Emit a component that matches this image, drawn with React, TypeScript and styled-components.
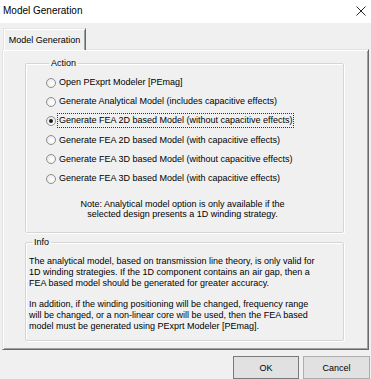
import React from "react";
import styled, { createGlobalStyle } from "styled-components";

const Global = createGlobalStyle`
  html, body { margin: 0; padding: 0; }
  body {
    background: #f0f0f0;
    font-family: "Liberation Sans", Arial, sans-serif;
    color: #000;
    overflow: hidden;
  }
`;

const Window = styled.div`
  width: 371px;
  height: 379px;
  display: flex;
  flex-direction: column;
  background: #f0f0f0;
  overflow: hidden;
`;

const TitleBar = styled.div`
  height: 23px;
  flex: none;
  background: #ffffff;
  display: flex;
  align-items: center;
  justify-content: space-between;
  padding: 0 4px 0 3px;
  box-sizing: border-box;
`;

const Title = styled.span`
  font-size: 10px;
  line-height: 12px;
  margin-top: -1px;
`;

const CloseIcon = styled.svg`
  width: 10px;
  height: 10px;
  margin-right: 1px;
  margin-top: -1px;
`;

const TabStrip = styled.div`
  height: 26px;
  flex: none;
  display: flex;
  align-items: flex-end;
  padding: 0 0 0 3px;
  box-sizing: border-box;
  position: relative;
  z-index: 1;
`;

const Tab = styled.div`
  height: 22px;
  width: 83px;
  box-sizing: border-box;
  display: flex;
  align-items: center;
  justify-content: center;
  font-size: 9px;
  background: #f0f0f0;
  border-top: 1px solid #e3e3e3;
  border-left: 1px solid #e3e3e3;
  border-right: 1px solid #696969;
  box-shadow: inset 1px 1px 0 #ffffff, inset -1px 0 0 #a0a0a0;
  margin-bottom: -1px;
  padding-bottom: 0;
`;

const TabPage = styled.div`
  height: 303px;
  margin: 0 2px 0 2px;
  box-sizing: border-box;
  border-top: 1px solid #e3e3e3;
  border-left: 1px solid #e3e3e3;
  border-right: 1px solid #696969;
  border-bottom: 1px solid #696969;
  box-shadow: inset 1px 1px 0 #ffffff, inset -1px -1px 0 #a0a0a0;
  background: #f0f0f0;
  display: flex;
  flex-direction: column;
  gap: 4px;
  padding: 8px 24px 0 22px;
`;

const GroupBox = styled.fieldset<{ $pad: string }>`
  margin: 0;
  min-width: 0;
  border: 1px solid #d5d5d5;
  border-radius: 2px;
  box-shadow: 1px 1px 0 #ffffff, inset 1px 1px 0 #ffffff;
  padding: ${(p) => p.$pad};
  display: flex;
  flex-direction: column;
`;

const Legend = styled.legend`
  font-size: 9px;
  line-height: 11px;
  padding: 0 2px;
  margin-left: 3px;
`;

const RadioList = styled.div`
  display: flex;
  flex-direction: column;
`;

const RadioRow = styled.div`
  height: 19.2px;
  display: flex;
  align-items: center;
  gap: 3px;
  font-size: 9px;
`;

const RadioCircle = styled.span<{ $checked: boolean }>`
  width: 10px;
  height: 10px;
  box-sizing: border-box;
  border-radius: 50%;
  border: 1px solid #8e8f8f;
  background: radial-gradient(circle at 60% 60%, #ffffff 0%, #f4f4f4 45%, #d9d9d9 100%);
  display: flex;
  align-items: center;
  justify-content: center;
  flex: none;
  &::after {
    content: "";
    display: ${(p) => (p.$checked ? "block" : "none")};
    width: 4px;
    height: 4px;
    border-radius: 50%;
    background: #1a1a1a;
  }
`;

const RadioLabel = styled.span<{ $focused: boolean }>`
  white-space: nowrap;
  line-height: 11px;
  padding: 1px 1px;
  margin-left: -1px;
  outline: ${(p) => (p.$focused ? "1px dotted #333" : "none")};
  outline-offset: 0;
`;

const Note = styled.div`
  font-size: 9px;
  line-height: 10px;
  text-align: center;
  white-space: nowrap;
  margin: 11px 0 0 0;
  padding-right: 14px;
`;

const InfoText = styled.div`
  font-size: 9px;
  line-height: 10.75px;
  white-space: nowrap;
`;

const ButtonRow = styled.div`
  flex: none;
  display: flex;
  justify-content: flex-end;
  gap: 4px;
  padding: 6px 1px 0 0;
`;

const Button = styled.button<{ $default?: boolean }>`
  width: ${(p) => (p.$default ? "66px" : "67px")};
  height: 23px;
  box-sizing: border-box;
  font-family: "Liberation Sans", Arial, sans-serif;
  font-size: 9px;
  color: #000;
  background: #e1e1e1;
  border: 1px solid ${(p) => (p.$default ? "#7a7a7a" : "#adadad")};
  border-radius: 0;
  padding: 0;
  display: flex;
  align-items: flex-start;
  justify-content: center;
  padding-top: 6px;
`;

const options = [
  "Open PExprt Modeler [PEmag]",
  "Generate Analytical Model (includes capacitive effects)",
  "Generate FEA 2D based Model (without capacitive effects)",
  "Generate FEA 2D based Model (with capacitive effects)",
  "Generate FEA 3D based Model (without capacitive effects)",
  "Generate FEA 3D based Model (with capacitive effects)",
];

export default function App() {
  const selected = 2;
  return (
    <>
      <Global />
      <Window>
        <TitleBar>
          <Title>Model Generation</Title>
          <CloseIcon viewBox="0 0 10 10">
            <path d="M0.5 0.5 L9.5 9.5 M9.5 0.5 L0.5 9.5" stroke="#111" strokeWidth="0.9" fill="none" />
          </CloseIcon>
        </TitleBar>
        <TabStrip>
          <Tab>Model Generation</Tab>
        </TabStrip>
        <TabPage>
          <GroupBox $pad="4px 10px 13px 20px">
            <Legend>Action</Legend>
            <RadioList>
              {options.map((o, i) => (
                <RadioRow key={o}>
                  <RadioCircle $checked={i === selected} />
                  <RadioLabel $focused={i === selected}>{o}</RadioLabel>
                </RadioRow>
              ))}
            </RadioList>
            <Note>
              Note: Analytical model option is only available if the
              <br />
              selected design presents a 1D winding strategy.
            </Note>
          </GroupBox>
          <GroupBox $pad="8px 4px 9px 3px">
            <Legend>Info</Legend>
            <InfoText>
              The analytical model, based on transmission line theory, is only valid for
              <br />
              1D winding strategies. If the 1D component contains an air gap, then a
              <br />
              FEA based model should be generated for greater accuracy.
              <br />
              <br />
              In addition, if the winding positioning will be changed, frequency range
              <br />
              will be changed, or a non-linear core will be used, then the FEA based
              <br />
              model must be generated using PExprt Modeler [PEmag].
            </InfoText>
          </GroupBox>
        </TabPage>
        <ButtonRow>
          <Button $default>OK</Button>
          <Button>Cancel</Button>
        </ButtonRow>
      </Window>
    </>
  );
}
